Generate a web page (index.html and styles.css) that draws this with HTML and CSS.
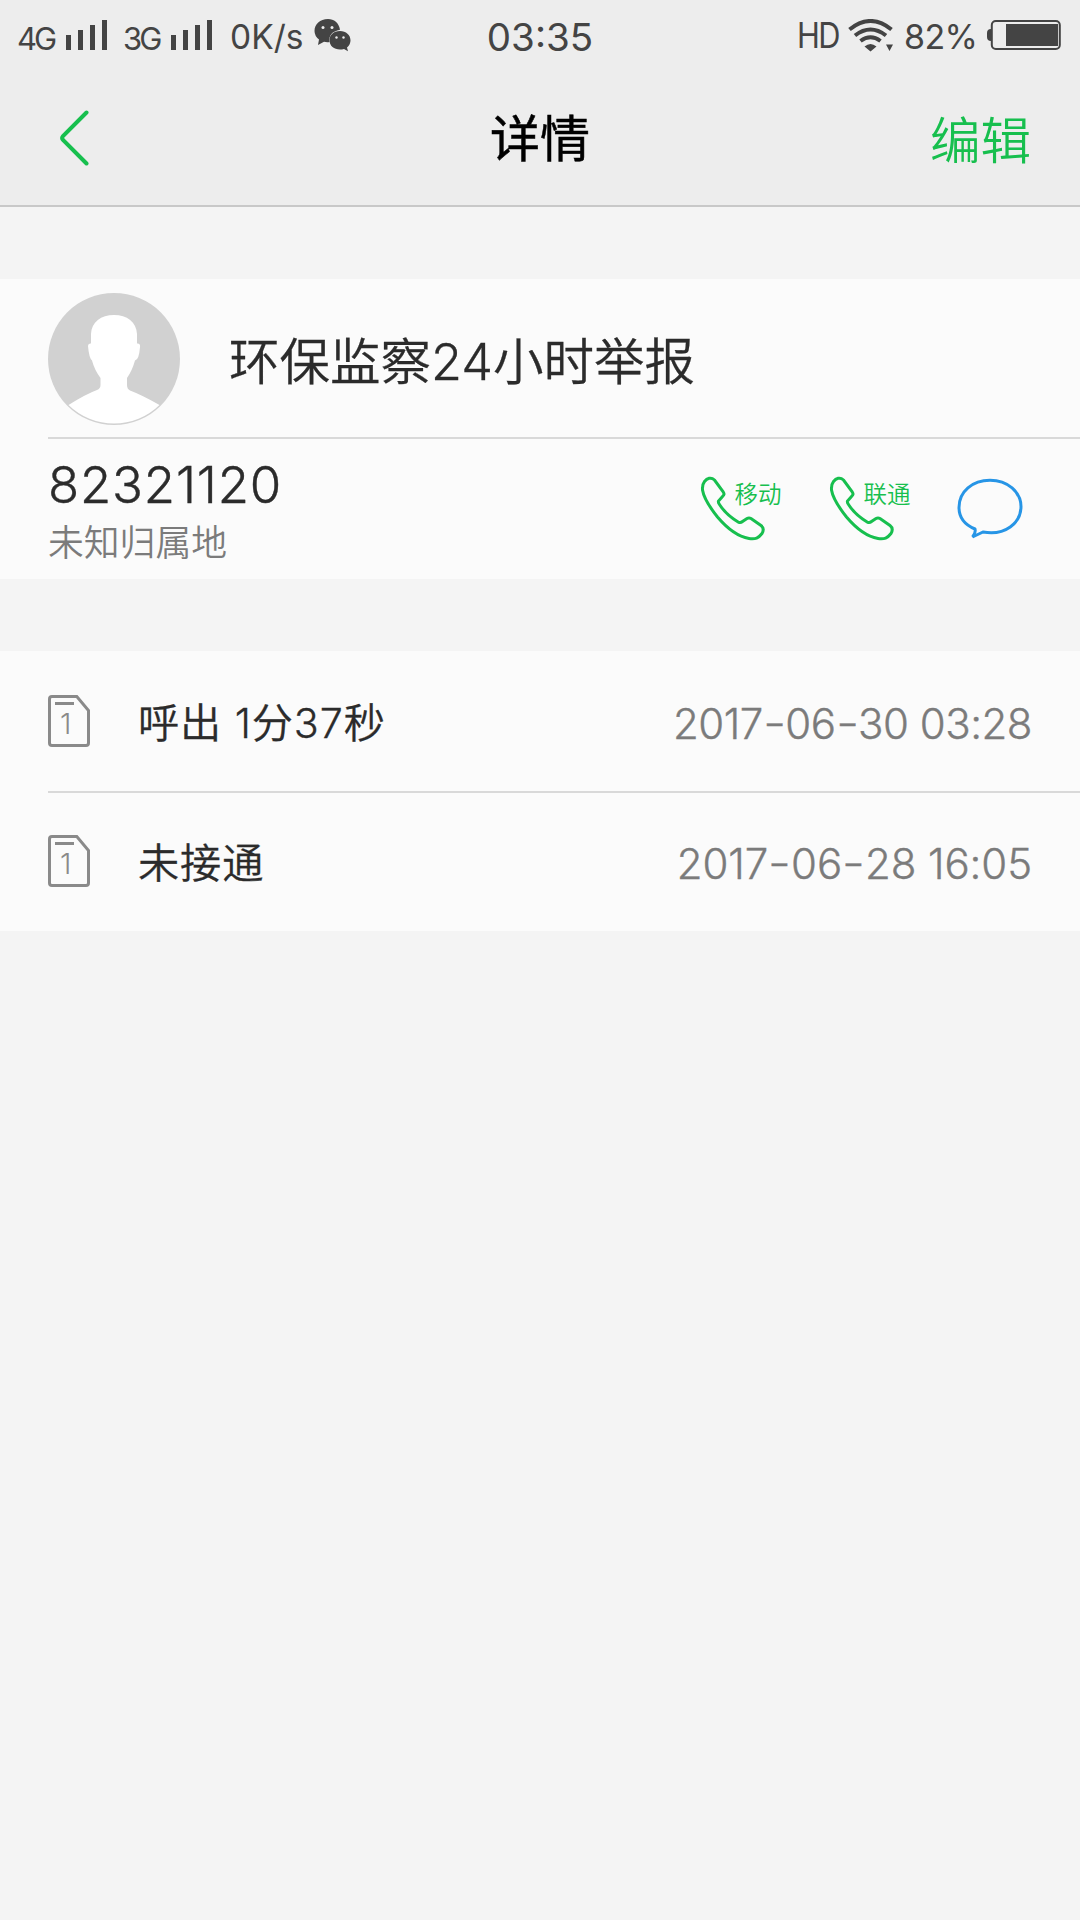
FILE: index.html
```html
<!DOCTYPE html>
<html lang="zh-CN">
<head>
<meta charset="utf-8">
<title>详情</title>
<link rel="stylesheet" href="styles.css">
</head>
<body>
<svg class="symbols" width="0" height="0" aria-hidden="true">
  <symbol id="bars" viewBox="0 0 41 30"><path d="M0 15h5v15H0zM12 10h5v20h-5zM24 5h5v25h-5zM36 0h5v30h-5z"/></symbol>
  <symbol id="phone" viewBox="0 0 65 65"><path d="M4 5.500C6.500 2.300 10.500 .700 14 4L22.500 15.500C24 18 24 18.500 22 20.500L18 25C17.500 26 18 27 19 28.500C23.500 35.500 30 41.500 38 46.200C39.500 47 40.500 46.800 42 45.500L46.500 42.500C48 41.600 49 41.600 50.500 42.500L60.500 49.500C63.500 51.800 63.500 54 61.500 57.500C58 62 55 63.500 48.500 62.500C40 61 28 54 17 41C9 31 3 20 2 14C1.700 10 2 8 4 5.500Z"/></symbol>
  <symbol id="sim" viewBox="0 0 42 52"><path d="M4 1.500H28.800L40.500 15.500V48Q40.500 50.500 38 50.500H4Q1.500 50.500 1.500 48V4Q1.500 1.500 4 1.500ZM7 8.500H26"/></symbol>
</svg>

<div class="status">
  <div class="status-left">
    <span class="net">4G</span><svg class="bars"><use href="#bars"/></svg>
    <span class="net net-second">3G</span><svg class="bars"><use href="#bars"/></svg>
    <span class="speed">0K/s</span>
    <svg class="wechat" viewBox="0 0 37 33">
      <path d="M14 0C6 0 .5 5 .5 12Q.5 17 5 20.500L4 26L10 22.800Q13 23.500 15.500 23Q14 13 26 10.700C25 4 20 0 14 0Z"/>
      <path d="M26 12C19.500 12 15.500 16 15.500 21.300C15.500 27 20 30.500 26 30.500Q28 30.500 30 30L34 32.300L33 28.500Q36.500 25.500 36.500 21.300C36.500 16 32 12 26 12Z"/>
      <g class="eyes"><circle cx="9" cy="8.500" r="1.500"/><circle cx="18" cy="8.500" r="1.500"/><circle cx="22.500" cy="18.500" r="1.200"/><circle cx="29.500" cy="18.500" r="1.200"/></g>
    </svg>
  </div>
  <div class="clock">03:35</div>
  <div class="status-right">
    <span class="hd">HD</span>
    <svg class="wifi" viewBox="0 0 46 33">
      <path class="arc" d="M1.500 10.500Q22.500-6.500 43.500 10.500M7 16.500Q22.500 4.500 38 16.500M12.500 22Q22.500 14.500 32.500 22"/>
      <path d="M16.500 27.500Q22.500 22.500 28.500 27.500L22.500 32.500ZM38 25.500H45L41.500 32Z"/>
    </svg>
    <span class="percent">82%</span>
    <svg class="battery" viewBox="0 0 74 30">
      <path d="M4 9Q0 9 0 13V17Q0 21 4 21ZM19 4H71V26H19Z"/>
      <rect class="case" x="4.800" y="1" width="68" height="28" rx="4"/>
    </svg>
  </div>
</div>

<header class="nav">
  <svg class="back" viewBox="0 0 30 56"><path d="M27.500 2.500L4 26Q2.300 28 4 30L27.500 53.500"/></svg>
  <h1 class="title">详情</h1>
  <span class="edit">编辑</span>
</header>

<main>
  <section class="card contact">
    <div class="person">
      <svg class="avatar" viewBox="0 0 132 132">
        <circle class="avatar-bg" cx="66" cy="66" r="66"/>
        <path class="figure" d="M66 22C79 22 88.500 29 89 41V50.500Q92.500 50 92 54Q91 67 87 67.500Q84 78 79 85V92Q79 96 82 97.500Q94 102 111.500 112A65 65 0 0 1 20.500 112Q38 101 49 97Q52.500 95.500 52.500 92V85Q46.500 77 44 67.500Q41 65 40 53Q40 50 43 50.500V41C43.500 29 53 22 66 22Z"/>
      </svg>
      <span class="name">环保监察24小时举报</span>
    </div>
    <div class="phone-row">
      <div class="number-box">
        <div class="number">82321120</div>
        <div class="place">未知归属地</div>
      </div>
      <div class="call"><svg class="phone"><use href="#phone"/></svg><span class="carrier">移动</span></div>
      <div class="call"><svg class="phone"><use href="#phone"/></svg><span class="carrier">联通</span></div>
      <svg class="bubble" viewBox="0 0 66 62"><path d="M18 51C7 46.500 2 38.500 2 29.500C2 13.500 15.500 2.300 33 2.300C50.500 2.300 64 14 64 28.500C64 45 48 58 26 54L15.500 59Q19 55 18 51Z"/></svg>
    </div>
  </section>

  <section class="card">
    <div class="record">
      <div class="sim"><svg><use href="#sim"/></svg><span>1</span></div>
      <span class="kind">呼出 1分37秒</span>
      <time class="date">2017<span class="dash">-</span>06<span class="dash">-</span>30 03:28</time>
    </div>
    <div class="record">
      <div class="sim"><svg><use href="#sim"/></svg><span>1</span></div>
      <span class="kind">未接通</span>
      <time class="date date-narrow">2017<span class="dash">-</span>06<span class="dash">-</span>28 16:05</time>
    </div>
  </section>
</main>
</body>
</html>
```
FILE: styles.css
```css
* { box-sizing: border-box; }
body {
  margin: 0;
  min-height: 1920px;
  background: #f4f4f4;
  color: #2b2b2b;
  font-family: Inter, "Noto Sans CJK SC", sans-serif;
  font-weight: 400;
  white-space: nowrap;
}
.symbols { position: absolute; }
svg { display: block; flex: none; }

.status {
  display: grid;
  grid-template-columns: 1fr auto 1fr;
  height: 72px;
  background: #ededed;
  color: #444;
  fill: #444;
}
.status-left, .status-right { display: flex; align-items: flex-start; }
.status-left { padding-left: 17px; }
.status-right { justify-content: flex-end; padding-right: 19px; }
.net { width: 49px; padding-top: 19px; font-size: 31px; line-height: 40px; letter-spacing: -3px; }
.net-second { margin-left: 16px; width: 48px; }
.bars { width: 41px; height: 30px; margin-top: 20px; }
.speed { width: 84px; margin-left: 18px; padding-top: 17px; font-size: 33.500px; line-height: 40px; }
.wechat { width: 37px; height: 33px; margin-top: 19px; }
.eyes { fill: #ededed; }
.clock { padding-top: 17px; font-size: 38.500px; line-height: 40px; }
.hd { width: 51px; padding-top: 15px; font-size: 35px; line-height: 40px; letter-spacing: -2px; transform: scaleX(.88); transform-origin: 0 0; }
.wifi { width: 46px; height: 33px; margin-top: 19px; }
.arc { fill: none; stroke: #444; stroke-width: 4; }
.percent { width: 83px; margin-left: 10px; padding-top: 17px; font-size: 34px; line-height: 40px; letter-spacing: -.6px; }
.battery { width: 74px; height: 30px; margin-top: 20px; }
.case { fill: none; stroke: #444; stroke-width: 2; }

.nav {
  display: grid;
  grid-template-columns: 1fr auto 1fr;
  align-items: start;
  height: 135px;
  padding: 0 49px 0 59px;
  background: #ededed;
  border-bottom: 2px solid #c8c8c8;
}
.back { width: 30px; height: 56px; margin-top: 38px; fill: none; stroke: #17bf4e; stroke-width: 4; stroke-linecap: round; }
.title { margin: 0; padding: 31px 0 0; width: 100px; transform: translateX(-5px); color: #000; font-size: 50px; line-height: 72px; font-weight: 400; -webkit-text-stroke: .5px; }
.edit { justify-self: end; padding-top: 33px; color: #17bf4e; font-size: 50.500px; line-height: 72px; font-weight: 350; }

main { display: flex; flex-direction: column; gap: 72px; padding-top: 72px; }
.card { padding-left: 48px; background: #fbfbfb; }
.person {
  display: flex;
  align-items: center;
  gap: 49px;
  height: 160px;
  padding-top: 2px;
  border-bottom: 2px solid #d9d9d9;
}
.avatar { width: 132px; height: 132px; }
.avatar-bg { fill: #d1d1d1; }
.figure { fill: #fff; }
.name { font-size: 50.5px; line-height: 72px; padding-top: 6px; font-weight: 350; -webkit-text-stroke: .3px; }
.phone-row { display: flex; align-items: flex-start; height: 140px; padding-right: 57px; }
.number-box { flex: 1; }
.number { padding-top: 15px; font-size: 51px; line-height: 62px; letter-spacing: .8px; font-weight: 350; -webkit-text-stroke: .4px; }
.place { padding-top: 2px; color: #7b7b7b; font-size: 35.8px; line-height: 50px; font-weight: 350; }
.call { display: flex; width: 129px; padding-top: 37px; transform: translateX(1.5px); }
.phone { width: 65px; height: 65px; fill: none; stroke: #17bf4e; stroke-width: 3; }
.carrier { margin: 2px 0 0 -31px; color: #17bf4e; font-size: 23.500px; line-height: 34px; font-weight: 350; }
.bubble { width: 66px; height: 62px; margin-top: 39px; fill: none; stroke: #2795e6; stroke-width: 3; }

.record { display: flex; align-items: flex-start; height: 140px; padding-right: 48px; }
.record + .record { border-top: 2px solid #d9d9d9; }
.sim { display: grid; width: 42px; height: 52px; margin-top: 44px; color: #8a8a8a; }
.sim svg, .sim span { grid-area: 1 / 1; }
.sim svg { width: 42px; height: 52px; fill: none; stroke: #8a8a8a; stroke-width: 3; }
.sim span { padding: 11px 0 0 12px; font-size: 29px; line-height: 36px; font-weight: 300; }
.kind { flex: 1; margin-left: 48px; padding-top: 42px; font-size: 41.200px; line-height: 60px; letter-spacing: .9px; font-weight: 350; -webkit-text-stroke: .3px; }
.date { padding-top: 43px; color: #7b7b7b; font-size: 42px; line-height: 60px; letter-spacing: -.5px; font-weight: 350; -webkit-text-stroke: .4px; }
.date-narrow { letter-spacing: -.1px; }
.dash { display: inline-block; margin: 0 2px; transform: scaleX(1.2) translateY(-1px); }
.record + .record .sim { margin-top: 42px; }
.record + .record .kind { padding-top: 40px; }
.record + .record .date { padding-top: 41px; }
```
